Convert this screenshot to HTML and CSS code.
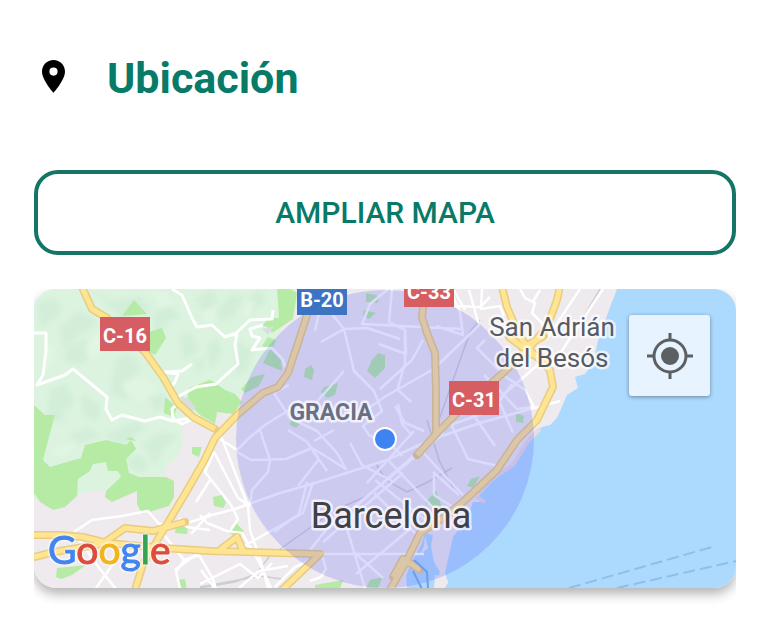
FILE: index.html
```html
<!DOCTYPE html>
<html lang="es">
<head>
<meta charset="utf-8">
<meta name="viewport" content="width=device-width, initial-scale=1">
<title>Ubicación</title>
<link rel="stylesheet" href="styles.css">
</head>
<body>
<main class="location">
  <header class="heading">
    <svg class="pin" viewBox="5 2 14 20" aria-hidden="true"><path d="M12 2C8.130 2 5 5.130 5 9c0 5.250 7 13 7 13s7-7.750 7-13c0-3.870-3.130-7-7-7zm0 9.500a2.500 2.500 0 0 1 0-5 2.500 2.500 0 0 1 0 5z"/></svg>
    <h1 class="title">Ubicación</h1>
  </header>
  <button class="expand" type="button">AMPLIAR MAPA</button>
  <section class="card" aria-label="Mapa de Barcelona">
    <div class="map">
      <svg class="canvas" viewBox="34 289 702 299" preserveAspectRatio="xMidYMid slice">
        <defs>
          <filter id="soft" x="-20%" y="-20%" width="140%" height="140%"><feGaussianBlur stdDeviation="2"/></filter>
        </defs>
        <rect class="land" x="34" y="289" width="702" height="299"/>

        <!-- Hills -->
        <path class="hill" d="M34 289H296L291 303 284 322 276 343 257 368 243 392 226 405 214 420 190 430 184 441 177 457 168 465 163 477 140 485 34 500z"/>
        <g class="relief" filter="url(#soft)">
          <path d="M38 304l14-6 10 8-7 12-15 8zM61 327l20-16 16 12-14 9-20 17zM95 291l18 11 26-5 15 15-16-3-15 8zM65 349l18-9 11 11-12 13-16-2zM116 359l14-5 10 16-18 13 5 17-16-8zM51 389l14-5 9 18-12 11 2 9-17-2zM83 394l17 12-3 15-14-6zM153 315l15-12 12 14-11 3-12 17zM181 337l10-4 7 17-14 9zM196 299l16-9 6 12-12 11zM219 309l12-14 12 1-9 20-14 5zM251 295l10-5 5 11-15 13zM238 342l14 8-5 19-11 7zM207 347l11-9 3 16-10 15zM71 435l16-7 13 8-22 8zM106 435l30-13 9 5-22 18zM143 446l17-13 17 3-16 15-5 13zM125 460l16-5 7 11-10 8zM194 363l12-5-7 16zM151 397l12-3 5 14-13 3z"/>
          <path class="relief-light" d="M45 344l11 3-4 18-8 8zM95 332l15 13-18 18-7-13zM122 386l21-11 15 15-18 14zM150 290l17 2 9 13-16 3zM201 313l15-8-2 15-10 4zM241 311l7-10 8 3-9 15zM55 445l21-2-5 12-20 3zM100 447l17-2 9 13-18 5z"/>
        </g>

        <!-- Parks -->
        <g class="park">
          <path d="M134 300L147 314 122 316zM162 328l4 10-11 17-10-5 4-18zM165 397l12 10-3 10-10-4zM189 388l21-8 5 3 10 7 10 4 7 8-9 12-16-2-2 12-15-9-13-14z"/>
          <path d="M34 405l11 10h10l-5 18-7 27 7 7 31-9 4-13 21-5 20 5 5-5 5 9-10 10 3 14 10 4h27l8 4v16l-5 9-27 8-5-10v-13l-25 11-7-5 1-6 15-14-3-6h-10l-2-9-13 2-3 7-12 8-1 17-12 11-12 3-13-8-6-9z"/>
          <path d="M277 289h13l7 4-4 26-15 10-6 4-6-7-5 1 8-9h10zM268 337l8 3-4 10-10-4zM213 497l9-2 4 8-3 5-9-2zM227 531l9-8 8 8-7 7zM57 568l11-1 18-2-14 10-11 4-5-2zM177 580l8-1 2 10h-7zM192 447h10l-3 10-7-3zM176 524l12 4-1 6-12-1zM315 585l28-5-3 9h-25zM125 439l6-2 5 4z"/>
          <path d="M270 349l11 9 1 13-10-4-9-4zM252 377l13-3-6 12-14 7-4-4zM305 369l6-4 3 5-2 10-8-3zM324 387l14-4-3 12-8 3-6-6zM372 360l6-7 7 2v13l-10 10-8-7zM366 293l13 3-1 7-12-1zM364 310l12 3-7 6-6-3zM436 490l6 18-17-5zM480 476l-7 12-6-2 4-7zM516 413l8 3-1 7-7-1zM370 580l13-3-5 11h-12zM291 419l9 5-4 4-6-3z"/>
        </g>
        <path class="quarry" d="M181 396l8 3 7 9-5 4-8-6zM262 329l12-3-6 9z"/>
        <path class="land" d="M182 424l17-3 7 4-1 18-17-1-5 9z"/>

        <!-- Sea and harbour -->
        <path class="sea" d="M617 289L610 307 604 324 598 341 593 363 585 374 575 377 578 388 567 395 557 418 550 425 542 427 533 433 525 447 513 467 498 474 487 487 477 498 485 502 473 502 467 518 453 537 445 573 448 582 445 588H736V289z"/>
        <path class="sea" d="M425 533L433 535 431 546 434 562 440 572 436 588H407L406 576 411 563 421 545z"/>
        <path class="land" d="M425 536l3 12-8 7 4-9zM435 575l9 1 4 7-4 5h-10z"/>
        <path class="beach" d="M540 429l-12 12-15 24-17 11-10 9-8 8M485 502l-9-5"/>

        <!-- Railways -->
        <path class="rail" d="M376 464l10 16 21 12 21-10 24-14M200 588l35-6 21-8 13-17 42-30 24-17 32-14M480 320l-10 12-18 51-12 34-7 20M427 420l12 40 16 32M600 289l-23 39M200 587l60-11 22 3"/>

        <!-- Streets -->
        <g class="street">
          <path class="street-wide" d="M34 333h12v18l-3 24-6 10 28-10 8-6 17 14 17 14-1 12 6 11 10-5 23 6 15-4 13 4 17-3M172 289l10 6 11 25 4 7 15-2 13 12 12-4-2 12 3 19-22 20-20 3-15 8-6 3-5-10 5-6 3-8-15-2 19-1 10-7M178 403l-6 6 1 10 9 5 18-8M233 336l17-16 22-1 1-9M263 325l-13 4 2 7 8 2-8 12 20-2 11 12 2 7"/>
          <path d="M74 532l18-12 30-4 26-5 10 12 12 5 40-12M74 533l26 36 16 20M113 564l-17 24M210 513l-19 21M210 530l-23-3-8-9M160 530l24 30-8 12 4 16M184 560l15-5 14 24 3 10M197 554l-22 16M210 480l-14 22M200 518l35-9 45-16 32-9 75-24 43-20 50-17 80-22M200 515l7 8 20 8 15 2 17 29 12 26M221 436l27 70 2 24 12 35 6 23M214 452l24 46 12 8M214 452l-9 20 26 33 7 14-8 12M217 437l20 13 12-12 16-13 24-15 11-10M201 570l18 24M244 546l41-23 18-10 10-31M239 588l20-17 29-5M275 587l20-20 27-12 4 14-5 8-11 4M200 584l40-20 18 14 14-15M203 470l8-12"/>
          <path d="M237 452l14 8 35-1 26-11 10 6 24 15-9-16-20-22-27-13-16-25 15-8M288 430l19 12 20 29M260 430l10 30-2 12-16 18-2 15M307 482l-8 32-25 18M331 300l-13 17-3 14M331 313l13 16-23 13M344 329l10 42 20 20 8 20-19 15 6 9 16 9M344 329l23-1 33 11M344 371l-30 34M388 289l-18 15-8 20 100 5M392 289l-3 33 16 8v33l-8 28M405 330l1 24-27-10M380 389l32-29 11-20M367 409l19-13 46-26 11-10 23-22 13-13-10-35M450 289l10 23 3 23-27-9M398 404l4 20 9 10M411 402l-13-12M485 340l-8 8 29 29 19 13 9 17-17 2-14-15-19-19M430 305l50 2 10-10M482 289l-1 20 19-3 4 10M520 289l5 9 10 5-3 10 12 12M453 289l12 21M540 290l-8 13M580 289l-34 51M603 289l-52 78M541 362l-40 35"/>
          <path d="M310 550l16-20 118-97M323 542l80-69M367 483l47-52M375 480l54 43M389 461l51 54M416 445l47 50M374 493l41 40M320 554h104M377 430l25 26M355 507l78-68M347 529l18 59M410 529l-54 45M433 472l26 23M434 475v20l27 17M355 553l28 25M350 443l12 22 30 16M436 430l57-20 19-26M450 422l18 37 30 7M500 403l13 30M466 404l29 42M314 441l20-11M395 406l10 17 19 8M319 459l-21 27"/>
        </g>

        <!-- Main roads -->
        <g class="road-edge">
          <path id="r1" d="M82 287l10 22 15 9 38 34 18 25 15 26 15 14 22 12"/>
          <path id="r2" d="M313 287l-6 28-7 22-12 36-10 14-15 6-26 22-22 23-11 23-19 33-18 30-24 40-8 26"/>
          <path id="r3" d="M34 535h26l23 2 24 6 56 5 47 3 110 3-20 19-18 17M34 557l20-5 48-8 23-16 28 3 32-9M220 550l17-13 6 14"/>
          <path id="r4" d="M425 287l-2 20-1 10 5 16 8 20 1 37v44M417 455l20-22 20-20 46-40 27-26 17-20 10-27 3-14M502 287l5 20 13 30 13 16 17 17 3 17-16 33-20 20-20 30-34 32-20 16-23 15-13 27-17 30"/>
          <path id="r5" d="M393 577l10-18 10 6 7 5M509 337l24 18 15 5M522 348l22-12"/>
        </g>
        <g class="road"><use href="#r1"/><use href="#r2"/><use href="#r3"/><use href="#r4"/><use href="#r5"/></g>

        <path class="ferry" d="M569 588l143-41M617 588l119-27"/>

        <!-- Search radius -->
        <circle class="radius" cx="385" cy="439" r="149"/>
        <path class="harbour-line" d="M413 571l9 18M414 560l13 12 1 16"/>
        <circle class="position" cx="385" cy="439" r="11"/>

        <!-- Road shields -->
        <g class="shield">
          <rect x="100" y="317" width="50" height="34"/><text x="125" y="343">C-16</text>
          <rect class="shield-blue" x="297" y="281" width="50" height="34"/><text x="322" y="307">B-20</text>
          <rect x="404" y="273" width="50" height="34"/><text x="429" y="299">C-33</text>
          <rect x="449" y="381" width="50" height="34"/><text x="474" y="407">C-31</text>
        </g>

        <!-- Place names -->
        <g class="place">
          <text class="town" x="552" y="336">San Adrián</text>
          <text class="town" x="552" y="367">del Besós</text>
          <text class="district" x="331" y="420">GRACIA</text>
          <text class="city" x="391" y="528">Barcelona</text>
        </g>
        <text class="brand" x="48" y="564"><tspan class="g-blue">G</tspan><tspan class="g-red">o</tspan><tspan class="g-yellow">o</tspan><tspan class="g-blue">g</tspan><tspan class="g-green">l</tspan><tspan class="g-red">e</tspan></text>
      </svg>
      <button class="locate" type="button" aria-label="Mi ubicación">
        <svg class="target" viewBox="0 0 46 46" aria-hidden="true"><circle class="target-ring" cx="23" cy="23" r="16"/><circle cx="23" cy="23" r="9"/><path class="target-ring" d="M23 0v7M23 39v7M0 23h7M39 23h7"/></svg>
      </button>
    </div>
  </section>
</main>
</body>
</html>
```
FILE: styles.css
```css
* { box-sizing: border-box; }

body {
  margin: 0;
  background: #fff;
  font-family: Roboto, "Liberation Sans", sans-serif;
}

.location {
  display: flex;
  flex-direction: column;
  gap: 34px;
  padding: 20px 33px 42px 34px;
}

.heading {
  display: flex;
  align-items: center;
  gap: 42px;
  height: 116px;
  padding-left: 8px;
}

.pin { width: 23px; height: 33px; margin-bottom: 4px; }

.title {
  margin: 0;
  color: #087a68;
  font-size: 43px;
  font-weight: 700;
  line-height: 50px;
}

.expand {
  width: 100%;
  height: 85px;
  padding: 0;
  border: 4px solid #147567;
  border-radius: 24px;
  background: #fff;
  color: #087a68;
  font: 500 30px/34px Roboto, "Liberation Sans", sans-serif;
}

/* Keeps the shadow below the card only */
.card { clip-path: inset(0 0 -40px 0); }

.map {
  position: relative;
  border-radius: 22px;
  box-shadow: 0 6px 12px rgba(0, 0, 0, .3);
}

.canvas {
  display: block;
  width: 100%;
  aspect-ratio: 702 / 299;
  border-radius: 22px;
}

.land { fill: #eeeaed; }
.hill { fill: #dbf3df; }
.relief { fill: #c9e8d2; opacity: .5; }
.relief-light { fill: #e6f8e6; }
.park { fill: #b5eba5; }
.quarry { fill: #d9dfdc; }
.sea { fill: #acdaff; }
.beach { fill: none; stroke: #e5dce5; stroke-width: 4; }
.rail { fill: none; stroke: #cdcdd6; stroke-width: 1.5; }
.street { fill: none; stroke: #fff; stroke-width: 2.5; stroke-linejoin: round; }
.street-wide { stroke-width: 3; }
.road-edge { fill: none; stroke: #e8cc80; stroke-width: 8; stroke-linecap: round; stroke-linejoin: round; }
.road use { stroke: #ffe591; stroke-width: 5; }
.road { fill: none; }
.ferry { fill: none; stroke: #8fbfe6; stroke-width: 2; stroke-dasharray: 12 5; }
.radius { fill: rgba(90, 90, 245, .22); }
.harbour-line { fill: none; stroke: #6b9df0; stroke-width: 2; }
.position { fill: #3f83f2; stroke: #fff; stroke-width: 2; }

.shield rect { fill: #d65d62; }
.shield .shield-blue { fill: #3c74c4; }
.shield text {
  fill: #fff;
  font-size: 20px;
  font-weight: 700;
  text-anchor: middle;
}

.place text {
  paint-order: stroke;
  stroke: rgba(255, 255, 255, .7);
  stroke-width: 5px;
  stroke-linejoin: round;
  text-anchor: middle;
}
.place .town { fill: #555b65; font-size: 26px; }
.place .district { fill: #687086; font-size: 23px; font-weight: 700; }
.place .city { fill: #404045; font-size: 36px; }

.brand {
  font-family: Lato, Roboto, sans-serif;
  font-size: 39px;
  font-weight: 400;
  stroke-width: 1px;
  filter: drop-shadow(0 0 1px #fff) drop-shadow(0 0 1px #fff);
}
.g-blue { fill: #4385ee; stroke: #4385ee; }
.g-red { fill: #dc4c3f; stroke: #dc4c3f; }
.g-yellow { fill: #f0b51c; stroke: #f0b51c; }
.g-green { fill: #34a455; stroke: #34a455; }

.locate {
  position: absolute;
  top: 26px;
  right: 26px;
  display: grid;
  place-items: center;
  width: 81px;
  height: 81px;
  padding: 0;
  border: 0;
  border-radius: 3px;
  background: #e7f3ff;
  box-shadow: 0 1px 4px rgba(0, 0, 0, .4);
}

.target { width: 46px; height: 46px; fill: #5d6063; }
.target-ring { fill: none; stroke: #5d6063; stroke-width: 3; }
```
